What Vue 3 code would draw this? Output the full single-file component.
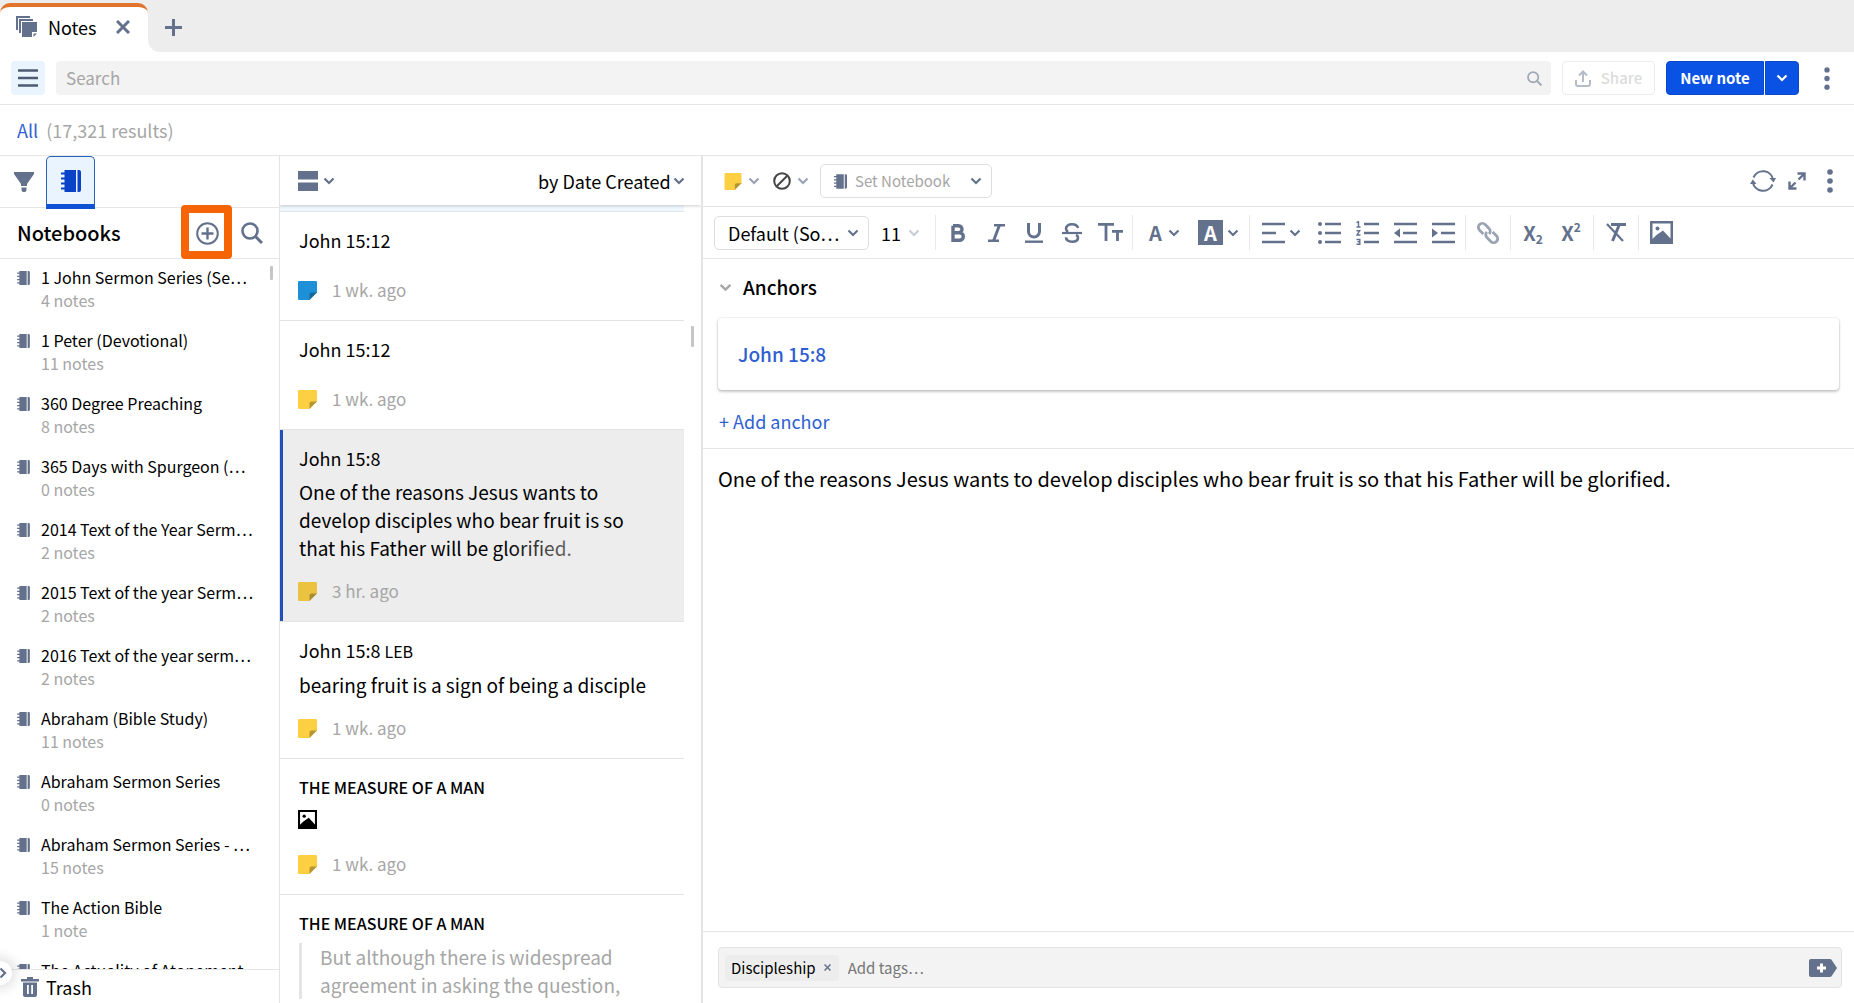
<script setup>
import { ref } from 'vue'

const notebooks = [
  { title: '1 John Sermon Series (Se…', count: '4 notes' },
  { title: '1 Peter (Devotional)', count: '11 notes' },
  { title: '360 Degree Preaching', count: '8 notes' },
  { title: '365 Days with Spurgeon (…', count: '0 notes' },
  { title: '2014 Text of the Year Serm…', count: '2 notes' },
  { title: '2015 Text of the year Serm…', count: '2 notes' },
  { title: '2016 Text of the year serm…', count: '2 notes' },
  { title: 'Abraham (Bible Study)', count: '11 notes' },
  { title: 'Abraham Sermon Series', count: '0 notes' },
  { title: 'Abraham Sermon Series - …', count: '15 notes' },
  { title: 'The Action Bible', count: '1 note' },
  { title: 'The Actuality of Atonement' },
]

const notes = [
  { title: 'John 15:12', color: 'blue', age: '1 wk. ago' },
  { title: 'John 15:12', color: 'yellow', age: '1 wk. ago' },
  {
    title: 'John 15:8',
    body: 'One of the reasons Jesus wants to develop disciples who bear fruit is so that his Father will be glorified.',
    color: 'yellow',
    age: '3 hr. ago',
    selected: true,
  },
  { title: 'John 15:8', version: 'LEB', body: 'bearing fruit is a sign of being a disciple', color: 'yellow', age: '1 wk. ago' },
  { title: 'THE MEASURE OF A MAN', caps: true, image: true, color: 'yellow', age: '1 wk. ago' },
  { title: 'THE MEASURE OF A MAN', caps: true, quote: 'But although there is widespread agreement in asking the question,' },
]

const search = ref('')
const tagText = ref('')
</script>

<template>
  <div class="app">
    <svg class="sprite" aria-hidden="true">
      <symbol id="i-chevron" viewBox="0 0 12 8"><path d="M1.500 1.500 6 6l4.500-4.500" fill="none" stroke="currentColor" stroke-width="2.200" /></symbol>
      <symbol id="i-notebook" viewBox="0 0 20 22">
        <path d="M3.500 0H15v22H3.500z M16.500 0H18a2 2 0 0 1 2 2v18a2 2 0 0 1-2 2h-1.500z" fill="currentColor" />
        <path d="M0 3.500h5M0 8.500h5M0 13.500h5M0 18.500h5" stroke="currentColor" stroke-width="2" />
      </symbol>
      <symbol id="i-search" viewBox="0 0 22 22"><circle cx="9" cy="9" r="7.500" fill="none" stroke="currentColor" stroke-width="2.600" /><path d="m14.500 14.500 6.500 6.500" stroke="currentColor" stroke-width="3" /></symbol>
      <symbol id="i-kebab" viewBox="0 0 6 24"><circle cx="3" cy="3" r="2.800" /><circle cx="3" cy="12" r="2.800" /><circle cx="3" cy="21" r="2.800" /></symbol>
      <symbol id="i-image" viewBox="0 0 23 23"><path fill-rule="evenodd" d="M0 0h23v23H0zM2.500 2.500v15.500l4-4L13 9.500l7.500 8V2.500z" /><circle cx="7.500" cy="7.500" r="2" /></symbol>
      <symbol id="i-note" viewBox="0 0 19 19"><path d="M0 1a1 1 0 0 1 1-1h17a1 1 0 0 1 1 1v10.500L11.500 19H1a1 1 0 0 1-1-1z" /><path d="M11.500 19v-5.500a2 2 0 0 1 2-2H19z" fill="#000" fill-opacity=".28" /></symbol>
    </svg>

    <header class="tabs">
      <div class="tab">
        <svg class="tab-icon" width="22" height="22" viewBox="0 0 22 22" fill="#63718c">
          <path d="M0 0h14v2H2v12H0z" /><path d="M3 3h14v2H5v12H3z" /><path d="M6 6h15v10h-5v5H6z" /><path d="M17.500 17.500H21L17.500 21z" />
        </svg>
        <span>Notes</span>
        <button class="plain" aria-label="Close tab">
          <svg width="14" height="14" viewBox="0 0 14 14"><path d="m1 1 12 12M13 1 1 13" stroke="currentColor" stroke-width="3" /></svg>
        </button>
      </div>
      <div class="tab-rest">
        <button class="plain" aria-label="New tab">
          <svg width="17" height="17" viewBox="0 0 17 17"><path d="M8.500 0v17M0 8.500h17" stroke="currentColor" stroke-width="3" /></svg>
        </button>
      </div>
    </header>

    <div class="topbar">
      <button class="menu" aria-label="Menu">
        <svg width="20" height="18" viewBox="0 0 20 18"><path d="M0 1.500h20M0 9h20M0 16.500h20" stroke="#4d5a72" stroke-width="2.600" /></svg>
      </button>
      <label class="search">
        <input v-model="search" type="text" placeholder="Search" aria-label="Search" />
        <svg width="15" height="15"><use href="#i-search" /></svg>
      </label>
      <button class="share" disabled>
        <svg width="16" height="17" viewBox="0 0 16 17" fill="none" stroke="#b5bcc8" stroke-width="2"><path d="M8 12V2M4 5.500 8 1.500l4 4M1 10v4a2 2 0 0 0 2 2h10a2 2 0 0 0 2-2v-4" /></svg>
        Share
      </button>
      <div class="split">
        <button class="new-note">New note</button>
        <button class="new-more" aria-label="More note types"><svg width="12" height="8"><use href="#i-chevron" /></svg></button>
      </div>
      <button class="plain top-kebab" aria-label="More"><svg width="6" height="23" fill="currentColor"><use href="#i-kebab" /></svg></button>
    </div>

    <div class="results"><a href="#">All</a><span>(17,321 results)</span></div>

    <main class="columns">
      <aside class="sidebar">
        <div class="side-tabs">
          <button class="plain filter" aria-label="Filters">
            <svg width="20" height="20" viewBox="0 0 20 20" fill="currentColor"><path d="M0 0h20v2l-7 10v2H7v-2L0 2zM7.500 15.500h5V18a2 2 0 0 1-2 2h-1a2 2 0 0 1-2-2z" /></svg>
          </button>
          <button class="side-tab" aria-label="Notebooks"><svg width="20" height="22"><use href="#i-notebook" /></svg></button>
        </div>
        <div class="side-head">
          <h2>Notebooks</h2>
          <button class="plain add" aria-label="Add notebook">
            <svg width="23" height="23" viewBox="0 0 23 23" fill="none" stroke="currentColor"><circle cx="11.500" cy="11.500" r="10.300" stroke-width="2" /><path d="M11.500 5.500v12M5.500 11.500h12" stroke-width="2.400" /></svg>
          </button>
          <button class="plain" aria-label="Search notebooks"><svg width="22" height="22"><use href="#i-search" /></svg></button>
        </div>
        <ul class="notebooks">
          <li v-for="n in notebooks" :key="n.title">
            <svg width="13" height="14"><use href="#i-notebook" /></svg>
            <div>
              <div class="nb-title">{{ n.title }}</div>
              <div v-if="n.count" class="nb-count">{{ n.count }}</div>
            </div>
          </li>
        </ul>
        <span class="thumb side-thumb"></span>
        <div class="trash">
          <svg width="18" height="20" viewBox="0 0 18 20"><path fill="currentColor" fill-rule="evenodd" d="M6 0h6v2h6v2.500H0V2h6zM2 5.500h14V18a2 2 0 0 1-2 2H4a2 2 0 0 1-2-2zM6 8v9h1.800V8zM10.200 8v9H12V8z" /></svg>
          Trash
          <button class="expander" aria-label="Expand sidebar"><svg width="8" height="12" viewBox="0 0 8 12"><path d="M1.500 1.500 6 6l-4.500 4.500" fill="none" stroke="currentColor" stroke-width="2.200" /></svg></button>
        </div>
      </aside>

      <section class="list">
        <div class="list-head">
          <button class="plain layout" aria-label="Layout">
            <svg width="20" height="20" viewBox="0 0 20 20" fill="currentColor"><path d="M0 0h20v8.500H0zM0 11.500h20V20H0z" /></svg>
            <svg width="12" height="8"><use href="#i-chevron" /></svg>
          </button>
          <label class="pick sort">
            <select aria-label="Sort"><option>by Date Created</option></select>
            <svg width="12" height="8"><use href="#i-chevron" /></svg>
          </label>
        </div>
        <div class="notes">
          <div class="peek"></div>
          <article v-for="(n, i) in notes" :key="i" class="note" :class="{ selected: n.selected }">
            <h3 :class="{ caps: n.caps }">{{ n.title }} <small v-if="n.version">{{ n.version }}</small></h3>
            <p v-if="n.body">{{ n.body }}</p>
            <div v-if="n.image" class="image-row"><svg width="19" height="19"><use href="#i-image" /></svg></div>
            <blockquote v-if="n.quote">{{ n.quote }}</blockquote>
            <div v-if="n.age" class="meta"><svg width="19" height="19" :class="n.color"><use href="#i-note" /></svg>{{ n.age }}</div>
          </article>
        </div>
        <span class="thumb list-thumb"></span>
      </section>

      <section class="editor">
        <div class="bar note-bar">
          <button class="plain duo" aria-label="Note colour"><svg width="18" height="17" class="yellow"><use href="#i-note" /></svg><svg class="soft" width="12" height="8"><use href="#i-chevron" /></svg></button>
          <button class="plain duo" aria-label="Highlight style">
            <svg width="18" height="18" viewBox="0 0 18 18" fill="none" stroke="#444" stroke-width="2"><circle cx="9" cy="9" r="7.800" /><path d="M14 4 4 14" /></svg>
            <svg class="soft" width="12" height="8"><use href="#i-chevron" /></svg>
          </button>
          <label class="pick box set-notebook">
            <svg class="lead" width="13" height="15"><use href="#i-notebook" /></svg>
            <select aria-label="Set notebook"><option>Set Notebook</option></select>
            <svg width="12" height="8"><use href="#i-chevron" /></svg>
          </label>
          <div class="bar-end">
            <button class="plain" aria-label="Sync">
              <svg width="26" height="24" viewBox="0 0 26 24" fill="none" stroke="currentColor" stroke-width="2"><path d="M3.500 8.500a10.300 10.300 0 0 1 19.700 2.500M22.500 15.500A10.300 10.300 0 0 1 2.800 13" /><path d="m19.500 9 4 4.500L26 9zM0 15l2.800-4.500L6.500 15z" fill="currentColor" stroke="none" /></svg>
            </button>
            <button class="plain" aria-label="Full screen">
              <svg width="18" height="18" viewBox="0 0 18 18" fill="none" stroke="currentColor" stroke-width="2.400"><path d="M9.500 1.500h7v7M16.500 1.500l-6 6M8.500 16.500h-7v-7M1.500 16.500l6-6" /></svg>
            </button>
            <button class="plain" aria-label="Note menu"><svg width="6" height="24" fill="currentColor"><use href="#i-kebab" /></svg></button>
          </div>
        </div>

        <div class="bar format-bar">
          <label class="pick box font">
            <select aria-label="Font"><option>Default (So…</option></select>
            <svg width="12" height="8"><use href="#i-chevron" /></svg>
          </label>
          <label class="pick size">
            <select aria-label="Font size"><option>11</option></select>
            <svg width="12" height="8"><use href="#i-chevron" /></svg>
          </label>
          <div class="group">
            <button class="plain" aria-label="Bold"><svg width="15" height="18" viewBox="0 0 15 18" fill="none" stroke="currentColor" stroke-width="3.400"><path d="M2 1.700h5.500a3.300 3.300 0 0 1 0 7H2M2 8.700h6.500a3.700 3.700 0 0 1 0 7.600H2zV1.700" /></svg></button>
            <button class="plain" aria-label="Italic"><svg width="17" height="18" viewBox="0 0 17 18" fill="none" stroke="currentColor"><path d="M6 1.300h11M0 16.700h11" stroke-width="2.600" /><path d="M11.500 1 5.500 17" stroke-width="3" /></svg></button>
            <button class="plain" aria-label="Underline"><svg width="18" height="20" viewBox="0 0 18 20" fill="none" stroke="currentColor"><path d="M3.500 0v8.500a5.500 5.500 0 0 0 11 0V0" stroke-width="3" /><path d="M0 18.700h18" stroke-width="2.400" /></svg></button>
            <button class="plain" aria-label="Strikethrough"><svg width="20" height="20" viewBox="0 0 20 20" fill="none" stroke="currentColor"><path d="M16 5C15.500 2.500 13 1.300 10 1.300 6.500 1.300 4 3 4 5.500c0 1.500.7 2.500 2 3.500M14 12c1.500.6 2 1.400 2 2.700 0 2.500-2.500 4-6 4-3.500 0-6-1.700-6-4.500" stroke-width="2.600" /><path d="M0 10h20" stroke-width="2.200" /></svg></button>
            <button class="plain" aria-label="Text size"><svg width="25" height="19" viewBox="0 0 25 19" fill="none" stroke="currentColor" stroke-width="2.800"><path d="M0 1.400h16M8 1.400V18M14 8.400h11M19.500 8.400V18" /></svg></button>
          </div>
          <div class="group">
            <button class="plain wide" aria-label="Text colour"><b class="letter">A</b><svg width="12" height="8"><use href="#i-chevron" /></svg></button>
            <button class="plain wide" aria-label="Highlight colour"><b class="letter filled">A</b><svg width="12" height="8"><use href="#i-chevron" /></svg></button>
          </div>
          <div class="group">
            <button class="plain align" aria-label="Align"><svg width="23" height="22" viewBox="0 0 23 22"><path d="M0 2h23M0 11h14M0 20h23" stroke="currentColor" stroke-width="2.600" /></svg><svg width="12" height="8"><use href="#i-chevron" /></svg></button>
            <button class="plain" aria-label="Bulleted list"><svg width="23" height="22" viewBox="0 0 23 22" fill="currentColor"><path d="M7 2h16M7 11h16M7 20h16" stroke="currentColor" stroke-width="2.600" /><circle cx="2" cy="2" r="2" /><circle cx="2" cy="11" r="2" /><circle cx="2" cy="20" r="2" /></svg></button>
            <button class="plain" aria-label="Numbered list"><svg width="23" height="24" viewBox="0 0 23 24" fill="none" stroke="currentColor"><path d="M8 3h15M8 12h15M8 21h15" stroke-width="2.600" /><path d="M.5 1.500 2.500.8V6M.5 6h4M.5 9.700h3.200L1 14h3.500M.5 18.500h3.300v4.700H.5M1.500 20.800h2.300" stroke-width="1.400" /></svg></button>
            <button class="plain" aria-label="Outdent"><svg width="23" height="22" viewBox="0 0 23 22" fill="currentColor"><path d="M0 2h23M9 11h14M0 20h23" stroke="currentColor" stroke-width="2.600" /><path d="M0 11 6 6.500v9z" /></svg></button>
            <button class="plain" aria-label="Indent"><svg width="23" height="22" viewBox="0 0 23 22" fill="currentColor"><path d="M0 2h23M9 11h14M0 20h23" stroke="currentColor" stroke-width="2.600" /><path d="M6 11 0 6.500v9z" /></svg></button>
          </div>
          <div class="group">
            <button class="plain soft" aria-label="Link"><svg width="24" height="24" viewBox="0 0 24 24" fill="none" stroke="currentColor" stroke-width="2.800"><g transform="rotate(45 12 12)"><path d="M9.500 16H4a4 4 0 0 1 0-8h5.500a4 4 0 0 1 4 4M14.500 8H20a4 4 0 0 1 0 8h-5.500a4 4 0 0 1-4-4" /></g></svg></button>
          </div>
          <div class="group">
            <button class="plain script" aria-label="Subscript">X<sub>2</sub></button>
            <button class="plain script" aria-label="Superscript">X<sup>2</sup></button>
          </div>
          <div class="group">
            <button class="plain" aria-label="Clear formatting"><svg width="20" height="19" viewBox="0 0 20 19" fill="none" stroke="currentColor"><path d="M5 1.500h15" stroke-width="3" /><path d="M13 2.500 6.500 18" stroke-width="3" /><path d="m1 1 16 17" stroke-width="2.200" /></svg></button>
          </div>
          <div class="group">
            <button class="plain" aria-label="Insert image"><svg width="23" height="23" fill="currentColor"><use href="#i-image" /></svg></button>
          </div>
        </div>

        <div class="anchors">
          <h2><svg width="13" height="9"><use href="#i-chevron" /></svg>Anchors</h2>
          <div class="card"><a href="#">John 15:8</a></div>
          <a href="#" class="add-anchor">+ Add anchor</a>
        </div>

        <div class="content">
          One of the reasons Jesus wants to develop disciples who bear fruit is so that his Father will be glorified.
        </div>

        <footer>
          <div class="tagbox">
            <span class="tag">Discipleship <button class="plain" aria-label="Remove tag"><svg width="7" height="7" viewBox="0 0 7 7"><path d="m.5.5 6 6M6.500.5l-6 6" stroke="currentColor" stroke-width="1.500" /></svg></button></span>
            <input v-model="tagText" type="text" placeholder="Add tags…" aria-label="Add tags" />
            <button class="plain" aria-label="Add tag"><svg width="28" height="18" viewBox="0 0 28 18"><path d="M2 0h19a2 2 0 0 1 1.500.7L28 9l-5.500 8.300A2 2 0 0 1 21 18H2a2 2 0 0 1-2-2V2a2 2 0 0 1 2-2z" fill="currentColor" /><path d="M12.500 4.500v9M8 9h9" stroke="#fff" stroke-width="3" /></svg></button>
          </div>
        </footer>
      </section>
    </main>
  </div>
</template>

<style>
body { margin: 0; }
</style>

<style scoped>
.app {
  display: flex; flex-direction: column; height: 100vh; overflow: hidden;
  background: #fff; color: #000;
  font: 17px/28px "Noto Sans CJK SC", "Source Sans Pro", sans-serif;
}
.app *, .app *::before, .app *::after { box-sizing: border-box; }
.sprite { position: absolute; width: 0; height: 0; }
svg { flex: none; display: block; }
button, input, select { font: inherit; color: inherit; margin: 0; padding: 0; border: 0; background: none; outline: 0; }
button { display: inline-flex; align-items: center; justify-content: center; }
.plain, .pick svg { color: #63718c; }
a { color: #2f5fd0; text-decoration: none; }
h2, h3, p, ul, blockquote { margin: 0; padding: 0; font-weight: 400; }
.soft, .plain .soft, .plain.soft { color: #9aa3b3; }
.yellow { fill: #fdd043; }
.blue { fill: #1e90d8; }

.tabs { display: flex; height: 52px; background: linear-gradient(90deg, #fff 200px, #ededed 200px); position: relative; }
.tab { position: relative; width: 148px; padding: 2px 18px 0 16px; display: flex; align-items: center; gap: 10px; background: linear-gradient(#ededed 10px, #fff 10px); font-size: 18px; }
.tab::before { content: ""; position: absolute; inset: 3px 0 0 0; border-top: 4px solid #e0742c; border-radius: 10px 10px 0 0; background: #fff; }
.tab > * { position: relative; }
.tab .plain { margin-left: auto; }
.tab-rest { flex: 1; display: flex; align-items: center; padding: 2px 0 0 17px; background: #ededed; border-bottom-left-radius: 12px; }

.topbar { display: flex; align-items: center; height: 53px; padding: 0 11px; gap: 11px; border-bottom: 1px solid #e5e6e8; }
.menu { width: 34px; height: 34px; border-radius: 4px; background: #e9f4fe; }
.search { flex: 1; display: flex; align-items: center; height: 34px; padding: 0 9px 0 10px; border-radius: 4px; background: #f3f3f3; color: #a2a9b6; }
.search input { flex: 1; min-width: 0; }
.search input::placeholder { color: #a6a6a6; opacity: 1; }
.share { width: 93px; height: 34px; gap: 10px; border: 1px solid #ececec; border-radius: 4px; color: #dcdcdc; font-size: 15px; font-weight: 500; }
.split { display: flex; gap: 1px; color: #fff; }
.split button { height: 34px; background: #0a52e4; border: 1px solid #0a49cc; }
.split .new-note { width: 98px; border-radius: 4px 0 0 4px; font-size: 15px; font-weight: 700; }
.split .new-more { width: 34px; border-radius: 0 4px 4px 0; }
.top-kebab { width: 33px; }

.results { display: flex; align-items: center; gap: 8px; height: 51px; padding: 0 0 1px 17px; border-bottom: 1px solid #e5e6e8; font-size: 18px; }
.results span { color: #a6a6a6; }

.columns { flex: 1; display: flex; min-height: 0; }
.sidebar { position: relative; width: 280px; flex: none; display: flex; flex-direction: column; border-right: 1px solid #e2e3e5; }
.side-tabs { display: flex; height: 52px; padding-left: 14px; gap: 12px; border-bottom: 1px solid #e5e6e8; }
.side-tab { position: relative; width: 49px; height: 53px; border: 1px solid #2a62b8; border-bottom: 5px solid #0f52d6; border-radius: 5px 5px 0 0; background: #e9f4fe; color: #0a43c8; }
.side-head { display: flex; align-items: center; height: 51px; padding: 0 16px 0 17px; gap: 22px; border-bottom: 1px solid #e5e6e8; }
.side-head h2 { flex: 1; font-size: 20px; }
h2 { font-size: 19px; font-weight: 500; }
.add { position: relative; }
.add::after { content: ""; position: absolute; inset: -17px -13px -14px -15px; border: 8px solid #f56505; border-radius: 4px; }
.notebooks { flex: 1; min-height: 0; overflow: hidden; list-style: none; padding-top: 7px; }
.notebooks li { display: flex; height: 63px; padding-left: 17px; gap: 11px; line-height: 23px; font-size: 16px; }
.notebooks svg { margin-top: 5px; color: #63718c; }
.nb-title { white-space: nowrap; }
.nb-count { color: #a6a6a6; }
.thumb { position: absolute; width: 3px; border-radius: 1px; background: #c6c6c6; }
.side-thumb { right: 6px; top: 110px; height: 14px; }
.trash { position: relative; display: flex; align-items: center; height: 34px; padding-left: 21px; gap: 7px; border-top: 1px solid #e5e6e8; font-size: 18px; }
.trash svg { color: #63718c; }
.expander { position: absolute; left: -12px; top: -9px; width: 24px; height: 24px; padding-left: 6px; border-radius: 50%; background: #fff; box-shadow: 0 0 12px 4px rgba(0, 0, 0, .12); }

.list { position: relative; width: 421px; flex: none; display: flex; flex-direction: column; }
.list-head { position: relative; z-index: 1; display: flex; justify-content: space-between; align-items: center; height: 49px; padding: 0 16px 0 18px; box-shadow: 0 1px 3px rgba(0, 0, 0, .2); clip-path: inset(0 0 -5px 0); }
.layout { gap: 5px; }
.pick { position: relative; display: flex; align-items: center; }
.pick select { appearance: none; width: 100%; }
.pick > svg:last-child { position: absolute; right: 0; pointer-events: none; }
.sort { font-size: 18px; }
.sort select { padding-right: 14px; }
.notes { flex: 1; min-height: 0; overflow: hidden; margin-right: 17px; }
.peek { height: 7px; background: #f0f7fd; border-bottom: 1px solid #dfe6ec; }
.note { position: relative; padding: 14px 24px 16px 19px; border-bottom: 1px solid #e2e3e5; }
.note h3 { font-size: 18px; }
.note h3.caps, .note small { font-size: 16px; }
.note h3.caps { font-weight: 500; }
.note p, .note blockquote, .image-row { position: relative; margin: 6px 0 0; font-size: 19px; }
.note .meta { display: flex; align-items: center; gap: 15px; margin: 22px 0 0 -1px; color: #a6a6a6; font-size: 17px; }
.note p + .meta, .note .image-row + .meta { margin-top: 15px; }
.note .image-row { height: 28px; padding-top: 3px; margin-left: -1px; }
.note blockquote { color: #a6a6a6; padding-left: 18px; border-left: 3px solid #e4e4e4; }
.selected { background: #ededed; box-shadow: inset 3px 0 #2050b8; }
.selected .yellow { fill: #ecc340; }
.selected p::after { content: ""; position: absolute; right: 0; bottom: 0; width: 160px; height: 28px; background: linear-gradient(90deg, rgba(237, 237, 237, 0), #ededed); }
.list-thumb { right: 7px; top: 170px; height: 21px; }

.editor { flex: 1; min-width: 0; display: flex; flex-direction: column; border-left: 2px solid #e2e3e5; }
.bar { display: flex; align-items: center; border-bottom: 1px solid #e5e6e8; }
.note-bar { height: 51px; padding: 0 18px 0 21px; gap: 13px; }
.duo { gap: 6px; }
.box { border: 1px solid #dcdde0; border-radius: 5px; height: 34px; }
.box.pick > svg:last-child { right: 9px; }
.set-notebook { width: 172px; margin-left: -2px; padding-left: 13px; gap: 8px; color: #a6a6a6; font-size: 15px; }
.bar-end { margin-left: auto; display: flex; align-items: center; gap: 12px; }
.bar-end .plain:last-child { width: 12px; margin-left: 6px; }
.format-bar { height: 52px; padding-left: 11px; }
.font { width: 155px; padding-left: 13px; font-size: 18px; }
.size { width: 66px; padding-left: 12px; font-size: 18px; }
.size.pick > svg:last-child { right: 15px; color: #c8cdd6; }
.group { display: flex; height: 35px; padding: 0 3px; border-left: 1px solid #e8e9eb; }
.group .plain { width: 38px; }
.group .plain.wide { width: 55px; gap: 4px; }
.group .plain.align { width: 57px; gap: 4px; }
.letter { font: 700 20px/25px "Noto Sans CJK SC", sans-serif; width: 17px; }
.letter.filled { width: 25px; background: #63718c; color: #fff; }
.script { font-size: 20px; font-weight: 700; }
.script sub, .script sup { font-size: 12px; line-height: 12px; }
.script sub { margin-top: 12px; }
.script sup { margin-bottom: 12px; }

.anchors { padding: 14px 15px 13px; border-bottom: 1px solid #e5e6e8; }
.anchors h2 { display: flex; align-items: center; gap: 11px; padding-left: 1px; }
.anchors h2 svg { color: #a6a6a6; }
.card { margin: 17px 0 17px; padding: 22px 20px; border-radius: 4px; box-shadow: 0 0 2px rgba(0, 0, 0, .2), 0 2px 3px rgba(0, 0, 0, .2); font-size: 19px; font-weight: 500; }
.add-anchor { display: block; padding-left: 1px; font-size: 18px; }
.content { flex: 1; padding: 16px 15px; font-size: 20px; }
footer { padding: 15px 12px 15px 15px; border-top: 1px solid #e5e6e8; }
.tagbox { display: flex; align-items: center; height: 41px; padding: 0 4px 0 6px; border: 1px solid #e2e3e5; border-radius: 4px; background: #f3f3f3; font-size: 15px; }
.tag { display: flex; align-items: center; gap: 8px; height: 26px; padding: 0 8px 0 6px; border-radius: 4px; background: #ededed; }
.tagbox input { flex: 1; min-width: 0; padding-left: 9px; }
.tagbox input::placeholder { color: #757575; opacity: 1; }
</style>
